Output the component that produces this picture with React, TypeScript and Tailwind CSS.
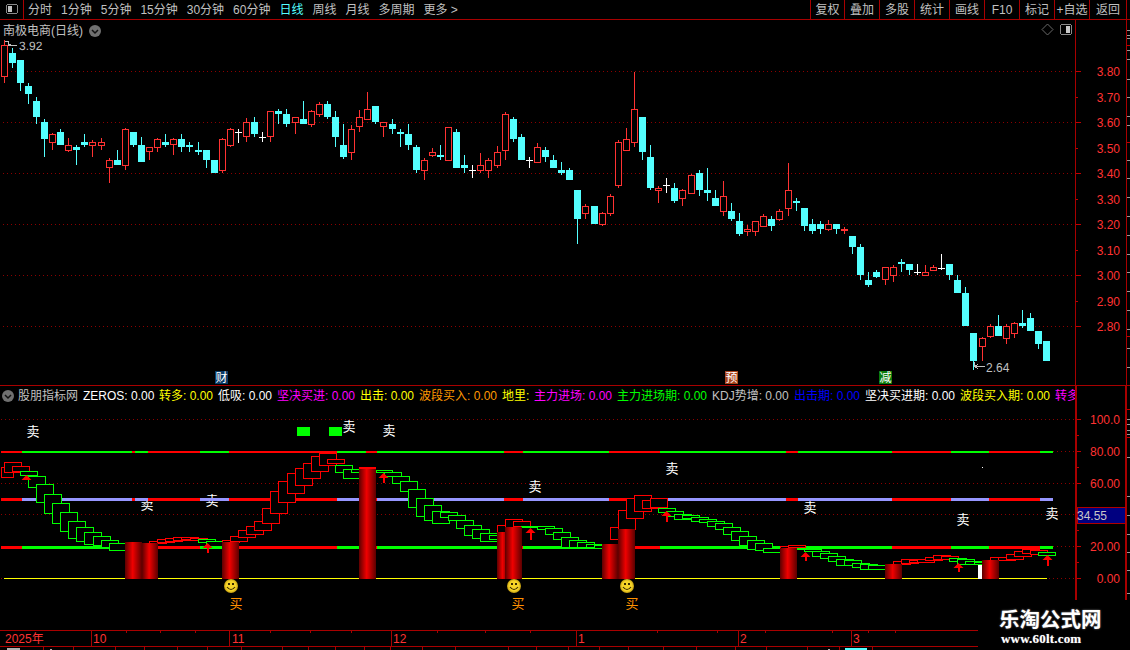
import React from "react";

const FONT = '"Liberation Sans","Noto Sans CJK SC",sans-serif';
const RED = "#ff3232";
const CY = "#54ffff";

type C = [string, number, number, number, number];
const c1: C[] = [
  ["r",120,136,230,248],["c",145,160,188,204],["c",181,181,248,272],["c",250,258,282,312],["c",290,303,350,372],
  ["c",357,366,417,470],["r",400,403,428,450],["c",387,396,435,435],["r",414,436,452,456],["c",435,441,450,495],
  ["c",402,426,435,440],["r",420,427,437,471],["r",414,427,437,450],["r",474,481,505,549],["c",450,480,495,495],
  ["r",385,388,497,510],["c",396,396,435,441],["c",411,435,486,486],["r",442,442,457,480],["r",414,418,443,456],
  ["c",402,426,435,441],["r",414,418,436,465],["c",402,417,441,456],["c",426,435,441,456],["c",426,450,456,465],
  ["c",450,450,480,504],["c",480,480,519,519],["r",414,418,513,519],["r",384,388,437,441],["w",387,396,396,429],
  ["r",354,367,412,426],["c",351,366,402,411],["w",396,411,411,426],["r",333,334,412,426],["c",327,333,342,372],
  ["c",327,342,372,381],["r",351,352,368,402],["c",303,357,372,372],["r",330,334,374,381],["r",306,313,344,351],
  ["c",303,312,351,357],["c",333,351,411,441],["c",372,435,471,477],["r",375,388,458,480],["r",330,352,382,396],
  ["r",276,328,359,359],["c",318,318,366,372],["r",366,367,382,411],["c",357,372,387,402],["c",387,396,402,441],
  ["c",372,402,435,450],["c",435,441,510,519],["r",474,481,512,540],["r",444,457,467,471],["c",435,465,471,480],
  ["r",382,382,482,482],["c",387,396,504,504],
];
const c4: C[] = [
  ["c",285,315,324,339],["w",315,330,330,354],["r",279,316,332,339],["r",294,301,332,354],["r",258,277,317,324],
  ["r",156,163,272,300],["c",171,177,237,246],["c",222,231,300,300],["w",291,300,300,324],["r",249,262,308,308],
  ["c",261,270,291,306],["c",285,300,324,324],["c",306,330,339,345],["c",324,330,360,360],["c",390,390,477,552],
  ["r",432,439,461,477],["c",438,438,492,492],["r",456,460,494,498],["r",402,409,461,468],["r",240,247,377,384],
  ["r",204,238,272,272],["r",36,148,248,261],["c",171,171,276,300],["c",255,291,384,390],["r",378,385,392,429],
  ["w",354,375,375,399],["c",369,384,423,429],["r",387,391,416,438],["r",342,346,401,402],["c",330,339,390,408],
  ["c",324,390,399,423],["c",390,414,438,438],["r",363,409,455,468],["c",429,453,477,483],["c",459,483,522,528],
  ["r",495,508,515,528],["r",484,484,515,528],["r",462,469,500,501],["c",468,477,498,513],["r",447,454,479,483],
  ["r",309,391,446,468],
];
const c5: C[] = [
  ["c",-6,3,9,33],["c",24,24,78,93],["c",57,72,93,102],["c",63,72,87,102],["r",60,73,90,93],["c",72,72,87,102],
  ["r",81,88,94,102],["c",108,108,141,162],["c",132,141,225,240],["c",216,240,255,261],["c",210,216,231,234],
  ["r",202,202,241,255],["r",195,202,227,246],["c",177,186,192,216],["c",192,192,210,225],["w",192,216,216,225],
  ["r",195,217,228,228],["r",195,202,212,213],["w",162,204,204,210],["c",192,192,225,240],["c",225,240,278,278],
  ["c",261,279,378,378],["c",399,399,483,510],["r",411,415,440,483],["r",372,379,410,414],["c",345,378,408,408],
  ["r",372,379,416,432],["r",366,370,401,414],["c",330,369,378,384],["c",339,354,393,393],["c",393,393,432,447],
  ["c",423,423,483,483],
];
const candles: C[] = [
  ...c1,
  ...c4.map((k) => [k[0], k[1] + 180, k[2] + 180, k[3] + 180, k[4] + 180] as C),
  ...c5.map((k) => [k[0], k[1] + 600, k[2] + 600, k[3] + 600, k[4] + 600] as C),
];
const breaks = [12, 24, 36, 48, 61, 73, 85, 97, 109, 121];
const colX = (i: number) => 4 + 8 * i + breaks.filter((b) => i >= b).length;

function Candle({ d, i }: { d: C; i: number }) {
  const x = colX(i);
  const [t, wt, bt, bb, wb] = d;
  const a = Math.round(wt / 3), b = Math.round(bt / 3), e = Math.round(bb / 3), f = Math.round(wb / 3);
  if (t === "w")
    return (
      <g fill="#ffffff">
        <rect x={x} y={a} width={1} height={f - a} />
        <rect x={x - 3} y={b} width={7} height={1} />
      </g>
    );
  if (t === "c")
    return (
      <g fill={CY}>
        <rect x={x} y={a} width={1} height={f - a} />
        <rect x={x - 3} y={b} width={7} height={Math.max(e - b, 2)} />
      </g>
    );
  return (
    <g>
      <rect x={x} y={a} width={1} height={f - a} fill={RED} />
      <rect x={x - 2.5} y={b + 0.5} width={6} height={Math.max(e - b - 1, 1)} fill="#000" stroke={RED} strokeWidth={1} />
    </g>
  );
}

const gridTop = [71, 122, 173, 224, 275, 326];

function PriceChart() {
  return (
    <svg width={1075} height={365} viewBox="0 20 1075 365" shapeRendering="crispEdges" className="block" fontFamily={FONT}>
      {gridTop.map((y) => (
        <line key={y} x1={3} x2={1075} y1={y + 0.5} y2={y + 0.5} stroke="#8c0000" strokeDasharray="1 3" />
      ))}
      {candles.map((d, i) => (
        <Candle key={i} d={d} i={i} />
      ))}
      <path d="M17 45.5H8M8 45.5V41H5M8 45.5l3-1.5" fill="none" stroke="#c0c0c0" />
      <text x={19} y={50} fill="#c0c0c0" fontSize={12} textRendering="geometricPrecision">3.92</text>
      <path d="M985 366.5H974M974 366.5V362M974 366.5l4 2M974 366.5l4-2" fill="none" stroke="#c0c0c0" />
      <text x={986} y={372} fill="#c0c0c0" fontSize={12}>2.64</text>
      <rect x={215} y={371} width={13} height={13} fill="#0a3a66" />
      <text x={221.5} y={382} fill="#fff" fontSize={12} textAnchor="middle">财</text>
      <rect x={725} y={371} width={13} height={13} fill="#a8441c" />
      <text x={731.5} y={382} fill="#fff" fontSize={12} textAnchor="middle">预</text>
      <rect x={879} y={371} width={13} height={13} fill="#0a7a0a" />
      <text x={885.5} y={382} fill="#fff" fontSize={12} textAnchor="middle">减</text>
      <path d="M1047.5 24l5.5 5.5-5.5 5.5-5.5-5.5z" fill="none" stroke="#6a6a6a" shapeRendering="auto" />
      <rect x={1060.5} y={24.5} width={11} height={10} rx={2} fill="none" stroke="#8a8a8a" />
      <rect x={1066} y={26} width={4} height={7} fill="#c8c8c8" />
    </svg>
  );
}

type Seg = [number, number, boolean];
const segs: Seg[] = [
  [1,22,true],[22,132,false],[132,135,true],[135,148,false],[148,200,true],[200,229,false],[229,337,true],[337,366,false],
  [366,377,true],[377,504,false],[504,523,true],[523,609,false],[609,660,true],[660,786,false],[786,798,true],[798,892,false],
  [892,951,true],[951,989,false],[989,1040,true],[1040,1053,false],
];

type B = [number, number, number, number, string];
const z = (arr: number[][], ox: number, col: string): B[] =>
  arr.map(([a, b, c, d]) => [ox + a / 3, 380 + b / 3, ox + c / 3, 380 + d / 3, col]);
const G = "#00ff00";
const R = "#ff0000";

const boxes: B[] = [
  ...z([[60,274,110,285],[84,289,134,320],[108,313,158,366],[132,343,182,398],[156,370,206,428],[180,397,230,452],[204,423,254,473],[228,441,278,482],[252,457,302,491],[279,469,329,495],[303,481,353,502],[327,490,375,510],[594,477,644,486],[618,484,666,498],[1005,256,1055,275],[1029,267,1079,293],[1053,267,1103,277]], 0, G),
  ...z([[18,270,65,277],[42,277,92,288],[66,289,116,310],[90,304,140,334],[114,328,164,380],[138,355,188,409],[162,376,212,419],[186,394,236,428],[210,397,260,412],[234,406,284,420],[258,421,308,445],[282,436,332,466],[306,448,356,475],[330,460,380,482],[357,466,381,476],[453,438,503,442],[501,439,551,446],[525,445,575,461],[549,457,599,478],[573,472,623,500],[597,481,647,500],[621,487,671,500],[648,492,698,500],[672,494,696,504],[864,385,914,395],[888,394,938,409],[912,403,962,418],[936,404,988,415],[963,412,1013,424],[987,418,1037,427],[1011,423,1061,439],[1035,430,1085,446],[1059,442,1109,461],[1083,454,1133,481],[1107,468,1157,496],[1131,481,1181,508]], 370, G),
  ...z([[15,490,65,509],[40,503,90,517],[141,503,165,506],[162,506,212,514],[186,514,236,529],[210,520,260,535],[234,529,284,544],[258,537,308,556],[282,541,332,556],[306,548,356,562],[330,552,380,566],[354,556,404,566],[597,533,647,542],[621,537,671,552],[645,542,695,553],[672,546,696,553],[864,516,914,524]], 750, G),
  ...z([[3,260,38,290],[12,246,62,275],[36,258,86,272],[447,484,497,490],[471,478,521,487],[495,475,545,483],[519,472,569,479],[543,472,593,478],[570,473,620,480],[666,481,716,485],[690,469,740,482],[714,450,764,472],[738,438,788,461],[762,423,812,449],[786,384,836,428],[810,334,860,398],[834,303,884,365],[861,279,911,338],[885,264,935,314],[909,249,959,293],[933,228,983,272],[957,219,1007,254],[981,237,1031,249]], 0, R),
  ...z([[381,436,405,456],[405,418,455,442],[429,424,479,438],[720,441,745,476],[744,391,794,447],[768,355,818,415],[792,346,842,394],[816,361,866,384],[840,354,890,382]], 370, R),
  ...z([[90,498,115,503],[114,495,164,502],[405,552,430,554],[429,544,479,553],[453,538,503,548],[477,540,527,545],[501,538,551,545],[525,532,575,541],[549,526,599,538],[573,527,623,536],[720,532,770,541],[744,530,794,541],[768,522,818,536],[792,514,842,528],[816,508,866,520],[840,509,890,522]], 750, R),
].sort((p, q) => p[0] - q[0]);

const bars: [number, number, number][] = [
  [125,142,542],[142,158,543],[222,239,542],[359,376,469],[497,509,532],[505,522,527],[602,618,544],[618,635,529],[780,797,548],[885,902,564],[982,999,560],
];
const arrows: [number, number, number][] = [[383,473,483],[530,528,540],[666,511,522],[805,552,561],[958,563,572],[1047,555,566],[207,543,553],[26,475,479]];
const sells: [number, number][] = [[33,431],[349,426],[389,430],[535,486],[672,468],[810,507],[963,519],[1052,513],[147,504],[212,500]];
const buys: [number, number][] = [[236,603],[518,603],[632,603]];
const smiles = [231, 514, 627];

function Smile({ x }: { x: number }) {
  const y = 586;
  return (
    <g shapeRendering="auto">
      <circle cx={x} cy={y} r={7} fill="url(#sm)" />
      <rect x={x - 3} y={y - 3} width={2} height={2} fill="#3a2a00" />
      <rect x={x + 1} y={y - 3} width={2} height={2} fill="#3a2a00" />
      <path d={`M${x - 4} ${y + 1}q4 5 8 0`} fill="none" stroke="#3a2a00" strokeWidth={1.2} />
    </g>
  );
}

function IndicatorChart() {
  const rowsY: [number, number, string][] = [[451, 2, "#00ff00"], [498, 3, "#9696ff"], [546, 3, "#00ff00"]];
  return (
    <svg width={1075} height={225} viewBox="0 405 1075 225" shapeRendering="crispEdges" className="block" fontFamily={FONT}>
      <defs>
        <linearGradient id="bar" x1="0" x2="1" y1="0" y2="0">
          <stop offset="0" stopColor="#5c0000" />
          <stop offset="0.45" stopColor="#f00000" />
          <stop offset="1" stopColor="#5c0000" />
        </linearGradient>
        <radialGradient id="sm">
          <stop offset="0.7" stopColor="#f6d428" />
          <stop offset="1" stopColor="#c09a10" />
        </radialGradient>
      </defs>
      {[419, 451, 483, 514, 546, 578].map((y) => (
        <line key={y} x1={1} x2={1075} y1={y + 0.5} y2={y + 0.5} stroke="#8c0000" strokeDasharray="1 3" />
      ))}
      {sells.map(([x, y], i) => (
        <text key={i} x={x} y={y + 5} fill="#fff" fontSize={13} textAnchor="middle">卖</text>
      ))}
      {rowsY.map(([y, h, col]) =>
        segs.map(([a, b, r], i) => <rect key={`${y}-${i}`} x={a} y={y} width={b - a} height={h} fill={r ? "#ff0000" : col} />)
      )}
      <rect x={4} y={578} width={1043} height={1} fill="#ffff00" />
      <rect x={297} y={427} width={13} height={9} fill="#00ff00" />
      <rect x={329} y={427} width={13} height={9} fill="#00ff00" />
      <rect x={982} y={467} width={1} height={1} fill="#fff" />
      {boxes.map(([a, b, c, d, col], i) => (
        <rect key={i} x={Math.round(a) + 0.5} y={Math.round(b) + 0.5} width={Math.round(c) - Math.round(a)} height={Math.max(Math.round(d) - Math.round(b), 1)} fill="#000" stroke={col} />
      ))}
      <rect x={978} y={565} width={4} height={14} fill="#fff" />
      {bars.map(([a, b, t], i) => (
        <rect key={i} x={a} y={t} width={b - a} height={579 - t} fill="url(#bar)" />
      ))}
      <rect x={359} y={467} width={17} height={2} fill="#ff0000" />
      {arrows.map(([x, t, b], i) => (
        <g key={i} fill="#ff0000">
          <path d={`M${x + 0.5} ${t}l5 5h-10z`} shapeRendering="auto" />
          <rect x={x} y={t + 4} width={2} height={b - t - 4} />
        </g>
      ))}
      {smiles.map((x) => (
        <Smile key={x} x={x} />
      ))}
      {buys.map(([x, y], i) => (
        <text key={i} x={x} y={y + 5} fill="#ff9000" fontSize={13} textAnchor="middle">买</text>
      ))}
      <text x={987} y={610} fill="#fff" fontSize={12} textAnchor="middle">明</text>
    </svg>
  );
}

const priceAxis: [string, number, boolean][] = [
  ["3.80",71,true],["3.70",97,false],["3.60",122,true],["3.50",148,false],["3.40",173,true],["3.30",199,false],
  ["3.20",224,true],["3.10",250,false],["3.00",275,true],["2.90",301,false],["2.80",326,true],
];

function PriceAxis() {
  return (
    <svg width={50} height={365} viewBox="1076 20 50 365" shapeRendering="crispEdges" className="block" fontFamily={FONT}>
      {priceAxis.map(([t, y, long]) => (
        <g key={t}>
          <rect x={1076} y={y} width={long ? 5 : 2} height={1} fill="#c00000" />
          <text x={1120} y={y + 5} fill={RED} fontSize={12} textAnchor="end">{t}</text>
        </g>
      ))}
    </svg>
  );
}

const indAxis: [string, number][] = [["100.0",419],["80.00",451],["60.00",483],["20.00",546],["0.00",578]];

function IndicatorAxis() {
  return (
    <svg width={49} height={244} viewBox="1077 386 49 244" shapeRendering="crispEdges" className="block" fontFamily={FONT}>
      {indAxis.map(([t, y]) => (
        <g key={t}>
          <rect x={1077} y={y} width={4} height={1} fill="#c00000" />
          <text x={1120} y={y + 5} fill={RED} fontSize={12} textAnchor="end">{t}</text>
        </g>
      ))}
      {[435, 467, 530, 562].map((y) => (
        <rect key={y} x={1077} y={y} width={2} height={1} fill="#c00000" />
      ))}
      <rect x={1077.5} y={507.5} width={48} height={16} fill="#000080" stroke="#b00000" />
      <text x={1077} y={520} fill="#c8c8c8" fontSize={12}>34.55</text>
    </svg>
  );
}

function Strip({ h, off, gray, red }: { h: number; off: number; gray: number[]; red: number[] }) {
  return (
    <svg width={3} height={h} viewBox={`0 ${off} 3 ${h}`} shapeRendering="crispEdges" className="block">
      {gray.map((y) => (
        <rect key={y} x={0} y={y} width={3} height={1} fill="#9a9a9a" />
      ))}
      {red.map((y) => (
        <rect key={y} x={0} y={y} width={3} height={1} fill="#c00000" />
      ))}
    </svg>
  );
}

const tabs = ["分时","1分钟","5分钟","15分钟","30分钟","60分钟","日线","周线","月线","多周期"];
const rightBtns: [string, string][] = [
  ["复权","w-[34px] border-l"],["叠加","w-[35px] border-l"],["多股","w-[35px] border-l"],["统计","w-[35px] border-l"],["画线","w-[35px] border-l"],
  ["F10","w-[35px] border-l"],["标记","w-[35px] border-l"],["+自选","w-[35px] border-l"],["返回","w-[38px] border-x"],
];

function Toolbar() {
  return (
    <div className="flex h-[20px] items-stretch justify-between border-b border-[#a80000] text-[12px] text-[#c0c0c0]">
      <div className="flex items-stretch">
        <div className="flex w-[24px] items-center justify-center border-r border-[#a80000]">
          <svg width={14} height={11} viewBox="0 0 14 11" shapeRendering="crispEdges">
            <rect x={1.5} y={0.5} width={11} height={9} rx={2} fill="none" stroke="#8a8a8a" />
            <rect x={3} y={2} width={4} height={6} fill="#c0c0c0" />
          </svg>
        </div>
        <div className="ml-[4px] flex items-center gap-[9px]">
          {tabs.map((t) => (
            <span key={t} className={t === "日线" ? "text-[#54ffff]" : ""}>{t}</span>
          ))}
          <span>更多 &gt;</span>
        </div>
      </div>
      <div className="mr-[3px] flex items-stretch">
        {rightBtns.map(([t, c]) => (
          <div key={t} className={`${c} flex items-center justify-center border-[#a80000]`}>{t}</div>
        ))}
      </div>
    </div>
  );
}

const legend: [string, string, string, string][] = [
  ["ZEROS: 0.00","","text-[#ffffff]","w-[76px]"],
  ["转多: ","0.00","text-[#ffff00]","w-[59px]"],
  ["低吸: ","0.00","text-[#ffffff]","w-[59px]"],
  ["坚决买进: ","0.00","text-[#ff00ff]","w-[83px]"],
  ["出击: ","0.00","text-[#ffff00]","w-[59px]"],
  ["波段买入: ","0.00","text-[#ff9900]","w-[83px]"],
  ["地里: ","","text-[#ffff00]","w-[32px]"],
  ["主力进场: ","0.00","text-[#ff00ff]","w-[83px]"],
  ["主力进场期: ","0.00","text-[#00ff00]","w-[95px]"],
  ["KDJ势增: ","0.00","text-[#c0c0c0]","w-[82px]"],
  ["出击期: ","0.00","text-[#0000ff]","w-[71px]"],
  ["坚决买进期: ","0.00","text-[#ffffff]","w-[95px]"],
  ["波段买入期: ","0.00","text-[#ffff00]","w-[95px]"],
  ["转多:","","text-[#ff00ff]","w-[30px]"],
];

function Legend() {
  return (
    <div className="flex h-[19px] items-center overflow-hidden whitespace-nowrap text-[12px] text-[#c0c0c0]">
      <svg width={18} height={12} viewBox="0 0 18 12" className="shrink-0">
        <circle cx={8} cy={6} r={6} fill="#707070" />
        <path d="M5 5l3 3 3-3" fill="none" stroke="#111" strokeWidth={1.5} />
      </svg>
      <span className="w-[65px] shrink-0">股朋指标网</span>
      {legend.map(([a, b, col, w], i) => (
        <span key={i} className={`${w} ${col} shrink-0`}>
          {a}
          {b}
        </span>
      ))}
    </div>
  );
}

const tallTicks = [91, 229, 391, 576, 738, 851];
const shortTicks = [126,160,195,270,310,351,437,485,530,657,717,765,832,868,895,1000];
const bottomTicks = [43,73,115,144,177,207,241,282,308,335,364,390,422,455,508,536,568,599,628,663,696,735,766,807,839,872];

function TimeAxis() {
  const labels: [number, string][] = [[93,"10"],[232,"11"],[393,"12"],[578,"1"],[740,"2"],[853,"3"]];
  return (
    <svg width={978} height={19} viewBox="0 631 978 19" shapeRendering="crispEdges" className="block" fontFamily={FONT}>
      {tallTicks.map((x) => (
        <rect key={x} x={x} y={631} width={1} height={15} fill="#a80000" />
      ))}
      {shortTicks.map((x) => (
        <rect key={x} x={x} y={631} width={1} height={2} fill="#a80000" />
      ))}
      <text x={5} y={643} fill={RED} fontSize={12}>2025年</text>
      {labels.map(([x, t]) => (
        <text key={t} x={x} y={643} fill={RED} fontSize={12}>{t}</text>
      ))}
      <rect x={0} y={646} width={978} height={1} fill="#a80000" />
      {bottomTicks.map((x) => (
        <rect key={x} x={x} y={647} width={1} height={3} fill="#a80000" />
      ))}
      <rect x={7} y={648} width={13} height={2} fill="#b0b0b0" />
      <rect x={50} y={649} width={2} height={1} fill="#b0b0b0" />
      <rect x={828} y={649} width={2} height={1} fill="#b0b0b0" />
      <rect x={845} y={648} width={22} height={2} fill="#54ffff" />
    </svg>
  );
}

export default function App() {
  return (
    <div className="relative h-[650px] w-[1130px] overflow-hidden bg-black" style={{ fontFamily: FONT }}>
      <Toolbar />
      <div className="flex h-[366px] border-b border-[#a80000]">
        <div className="relative w-[1075px] shrink-0">
          <PriceChart />
          <div className="absolute left-[3px] top-[2px] flex items-center gap-[6px] text-[12px] text-[#c0c0c0]">
            <span>南极电商(日线)</span>
            <svg width={12} height={12} viewBox="0 0 12 12">
              <circle cx={6} cy={6} r={6} fill="#707070" />
              <path d="M3 5l3 3 3-3" fill="none" stroke="#111" strokeWidth={1.5} />
            </svg>
          </div>
        </div>
        <div className="w-[52px] shrink-0 border-x border-[#a80000]">
          <PriceAxis />
        </div>
        <Strip h={365} off={20} gray={[30,35,38,50,59,79,97,116,125,160,178,197,216,235,254,272,291,310,329,348,367]} red={[45,142,336]} />
      </div>
      <div className="flex h-[245px] border-b border-[#a80000]">
        <div className="w-[1075px] shrink-0">
          <Legend />
          <IndicatorChart />
        </div>
        <div className="w-[52px] shrink-0 border-x-2 border-[#a80000]">
          <IndicatorAxis />
        </div>
        <Strip h={244} off={386} gray={[419,424,430,434,457,496,515,534,552,570,593]} red={[409,437]} />
      </div>
      <TimeAxis />
      <div className="absolute left-[978px] top-[600px] flex h-[50px] w-[152px] flex-col items-start bg-black text-white">
        <span className="ml-[21px] mt-[5px] text-[20.5px] font-bold leading-[26px] [text-shadow:0_0_2px_#888]" style={{ fontFamily: '"Noto Sans CJK SC",sans-serif' }}>乐淘公式网</span>
        <span className="ml-[23px] text-[13px] font-bold leading-[15px] tracking-[0.2px] [text-shadow:0_0_1px_#888]" style={{ fontFamily: '"Liberation Serif",serif' }}>www.60lt.com</span>
      </div>
    </div>
  );
}
